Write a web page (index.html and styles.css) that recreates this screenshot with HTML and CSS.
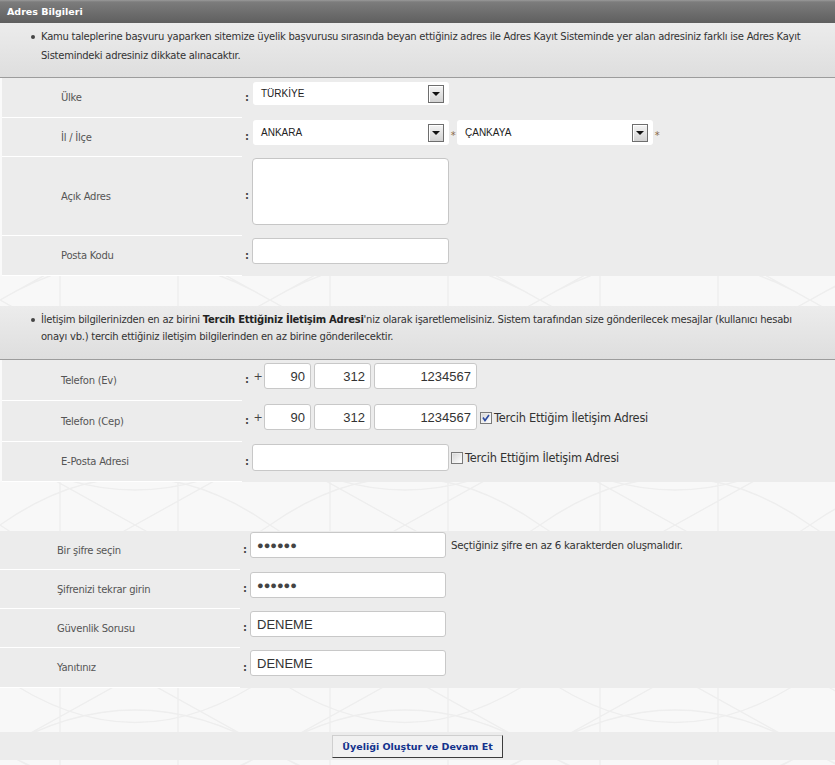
FILE: index.html
```html
<!DOCTYPE html>
<html lang="tr">
<head>
<meta charset="utf-8">
<title>Adres Bilgileri</title>
<link rel="stylesheet" href="styles.css">
</head>
<body>
<div class="hdr">Adres Bilgileri</div>
<div class="info info1">
  <ul>
    <li>Kamu taleplerine başvuru yaparken sitemize üyelik başvurusu sırasında beyan ettiğiniz adres ile Adres Kayıt Sisteminde yer alan adresiniz farklı ise Adres Kayıt<br>Sistemindeki adresiniz dikkate alınacaktır.</li>
  </ul>
</div>
<div class="sect bl">
  <div class="row h40">
    <div class="lbl">Ülke</div><div class="colon">:</div>
    <div class="fld p4"><div class="sel"><span>TÜRKİYE</span><i class="arr"></i></div></div>
  </div>
  <div class="row h39">
    <div class="lbl">İl / İlçe</div><div class="colon">:</div>
    <div class="fld p2"><div class="sel tall"><span>ANKARA</span><i class="arr"></i></div><span class="req">*</span><div class="sel tall"><span>ÇANKAYA</span><i class="arr"></i></div><span class="req">*</span></div>
  </div>
  <div class="row h79">
    <div class="lbl">Açık Adres</div><div class="colon">:</div>
    <div class="fld p1"><div class="ta"></div></div>
  </div>
  <div class="row h40">
    <div class="lbl">Posta Kodu</div><div class="colon">:</div>
    <div class="fld p2"><div class="inp w197"></div></div>
  </div>
</div>
<div class="gap g30"></div>
<div class="info info2">
  <ul>
    <li>İletişim bilgilerinizden en az birini <b>Tercih Ettiğiniz İletişim Adresi</b>'niz olarak işaretlemelisiniz. Sistem tarafından size gönderilecek mesajlar (kullanıcı hesabı<br>onayı vb.) tercih ettiğiniz iletişim bilgilerinden en az birine gönderilecektir.</li>
  </ul>
</div>
<div class="sect bl">
  <div class="row h41">
    <div class="lbl">Telefon (Ev)</div><div class="colon">:</div>
    <div class="fld p3"><span class="plus">+</span><div class="inp ph w47">90</div><div class="inp ph w57">312</div><div class="inp ph w103">1234567</div></div>
  </div>
  <div class="row h41">
    <div class="lbl">Telefon (Cep)</div><div class="colon">:</div>
    <div class="fld p3"><span class="plus">+</span><div class="inp ph w47">90</div><div class="inp ph w57">312</div><div class="inp ph w103">1234567</div>
      <label class="chk c1"><svg width="12" height="12" viewBox="0 0 12 12"><defs><linearGradient id="g1" x1="0" y1="0" x2="1" y2="1"><stop offset="0" stop-color="#d6d6d6"/><stop offset="1" stop-color="#ffffff"/></linearGradient></defs><rect x="0.5" y="0.5" width="11" height="11" fill="#f4f4f4" stroke="#7a7a7a"/><rect x="1.5" y="1.5" width="9" height="9" fill="url(#g1)"/><path d="M3 5.5L5 8.5L9 3" fill="none" stroke="#2b4aa0" stroke-width="1.6"/></svg><span>Tercih Ettiğim İletişim Adresi</span></label>
    </div>
  </div>
  <div class="row h40">
    <div class="lbl">E-Posta Adresi</div><div class="colon">:</div>
    <div class="fld p2"><div class="inp w197 h27"></div>
      <label class="chk c2"><svg width="12" height="12" viewBox="0 0 12 12"><defs><linearGradient id="g2" x1="0" y1="0" x2="1" y2="1"><stop offset="0" stop-color="#d6d6d6"/><stop offset="1" stop-color="#ffffff"/></linearGradient></defs><rect x="0.5" y="0.5" width="11" height="11" fill="#f4f4f4" stroke="#7a7a7a"/><rect x="1.5" y="1.5" width="9" height="9" fill="url(#g2)"/></svg><span>Tercih Ettiğim İletişim Adresi</span></label>
    </div>
  </div>
</div>
<div class="gap g49"></div>
<div class="sect pw">
  <div class="row h39">
    <div class="lbl">Bir şifre seçin</div><div class="colon">:</div>
    <div class="fld p1"><div class="inp w196 pass">●●●●●●</div><span class="hint">Seçtiğiniz şifre en az 6 karakterden oluşmalıdır.</span></div>
  </div>
  <div class="row h39">
    <div class="lbl">Şifrenizi tekrar girin</div><div class="colon">:</div>
    <div class="fld p2"><div class="inp w196 pass">●●●●●●</div></div>
  </div>
  <div class="row h39">
    <div class="lbl">Güvenlik Sorusu</div><div class="colon">:</div>
    <div class="fld p2"><div class="inp w196 txt">DENEME</div></div>
  </div>
  <div class="row h40 last">
    <div class="lbl">Yanıtınız</div><div class="colon">:</div>
    <div class="fld p2"><div class="inp w196 txt">DENEME</div></div>
  </div>
</div>
<div class="gap g44"></div>
<div class="btnbar"><button class="btn" type="button">Üyeliği Oluştur ve Devam Et</button></div>
</body>
</html>
```
FILE: styles.css
```css
* { box-sizing: border-box; }
html, body { height: 100%; }
body {
  margin: 0;
  font-family: "DejaVu Sans", Verdana, sans-serif;
  font-size: 10px;
  letter-spacing: -0.25px;
  color: #333;
  background: #f8f8f8 url("data:image/svg+xml;utf8,<svg xmlns='http://www.w3.org/2000/svg' width='270' height='150'><g fill='none' stroke='%23eeeeee' stroke-width='1.4'><path d='M0 0L270 150M270 0L0 150M60 0V150M178 0V150M0 75Q135 -20 270 75M0 75Q135 170 270 75M0 0Q135 80 270 0M0 150Q135 70 270 150'/></g></svg>");
}
.hdr {
  height: 23px;
  line-height: 24px;
  padding-left: 7px;
  color: #fff;
  font-weight: bold;
  font-size: 9.5px;
  letter-spacing: 0;
  background: linear-gradient(#9a9a9a 0, #7c7c7c 2px, #5f5f5f 100%);
}
.info {
  background: linear-gradient(#ececec, #dedede);
  border-bottom: 1px solid #9c9c9c;
}
.info1 { height: 55px; padding-top: 4px; }
.info2 { height: 54px; padding-top: 5px; }
.info ul { margin: 0; padding: 0 0 0 41px; list-style: none; }
.info li { position: relative; line-height: 19px; }
.info2 li { line-height: 17px; }
.info li::before {
  content: "";
  position: absolute;
  left: -10px;
  top: 8px;
  width: 4px;
  height: 4px;
  border-radius: 50%;
  background: #444;
}
.info2 li::before { top: 7px; }
.info b { font-weight: bold; color: #222; }

.sect { background: #ececec; }
.sect.bl { border-left: 2px solid #fafafa; }
.row { display: flex; }
.h39 { height: 39px; }
.h40 { height: 40px; }
.h41 { height: 41px; }
.h79 { height: 79px; }
.lbl {
  width: 240px;
  flex: none;
  display: flex;
  align-items: center;
  padding-left: 59px;
  border-bottom: 1px solid #fff;
  color: #555;
}
.pw .lbl { padding-left: 57px; }
.colon {
  width: 10px;
  flex: none;
  display: flex;
  align-items: center;
  padding: 0 0 2px 3px;
  color: #444;
  font-weight: bold;
  font-size: 10px;
}
.fld { display: flex; align-items: flex-start; }
.p1 { padding-top: 1px; }
.p2 { padding-top: 2px; }
.p3 { padding-top: 3px; }
.p4 { padding-top: 4px; }

.sel {
  width: 196px;
  height: 23px;
  margin-left: 1px;
  background: #fff;
  border-radius: 3px;
  display: flex;
  align-items: center;
  padding-left: 8px;
  font-family: "Liberation Sans", Arial, sans-serif;
  font-size: 10px;
  letter-spacing: 0;
  color: #222;
}
.sel.tall { height: 25px; }
.sel + .req + .sel { margin-left: 0; }
.arr {
  margin-left: auto;
  margin-right: 5px;
  width: 16px;
  height: 18px;
  border: 1px solid #6e6e6e;
  box-shadow: inset 1px 1px 0 #fff;
  background: linear-gradient(#f4f4f4, #d2d2d2);
  display: flex;
  align-items: center;
  justify-content: center;
}
.arr::after {
  content: "";
  width: 0;
  height: 0;
  border-left: 4px solid transparent;
  border-right: 4px solid transparent;
  border-top: 4px solid #111;
}
.req {
  width: 8px;
  text-align: center;
  color: #8a6a4a;
  font-size: 10px;
  line-height: 25px;
  padding-top: 3px;
}
.ta {
  width: 197px;
  height: 67px;
  background: #fff;
  border: 1px solid #c6c6c6;
  border-radius: 4px;
}
.inp {
  height: 26px;
  background: #fff;
  border: 1px solid #c8c8c8;
  border-radius: 3px;
  font-family: "Liberation Sans", Arial, sans-serif;
  font-size: 13px;
  letter-spacing: 0;
  color: #333;
  display: flex;
  align-items: center;
}
.h27 { height: 27px; }
.w47 { width: 47px; }
.w57 { width: 57px; }
.w103 { width: 103px; }
.w196 { width: 196px; }
.w197 { width: 197px; }
.ph { justify-content: flex-end; padding-right: 5px; margin-right: 3px; }
.ph:last-of-type { margin-right: 0; }
.plus {
  width: 12px;
  text-align: center;
  font-size: 11px;
  color: #444;
  line-height: 26px;
  padding-top: 1px;
}
.pass { padding-left: 6px; font-size: 11px; color: #444; }
.txt { padding-left: 6px; }
.chk {
  display: flex;
  align-items: center;
  height: 26px;
  color: #333;
  font-size: 11.4px;
  gap: 2px;
}
.c1 { margin-left: 3px; padding-top: 2px; }
.c2 { margin-left: 2px; padding-top: 2px; }
.hint {
  margin-left: 5px;
  line-height: 26px;
  font-size: 10.3px;
  color: #333;
}
.gap { background: transparent; }
.g30 { height: 30px; }
.g44 { height: 44px; }
.g49 { height: 49px; }
.btnbar {
  height: 28px;
  background: #ececec;
  display: flex;
  justify-content: center;
  align-items: center;
}
.btn {
  width: 171px;
  height: 23px;
  margin: 0;
  padding: 0;
  background: #f1f1f1;
  border: 1px solid;
  border-color: #cfcfcf #3c3c3c #3c3c3c #cfcfcf;
  font-family: "DejaVu Sans", Verdana, sans-serif;
  font-weight: bold;
  font-size: 9.5px;
  letter-spacing: 0;
  color: #13318c;
}
```
